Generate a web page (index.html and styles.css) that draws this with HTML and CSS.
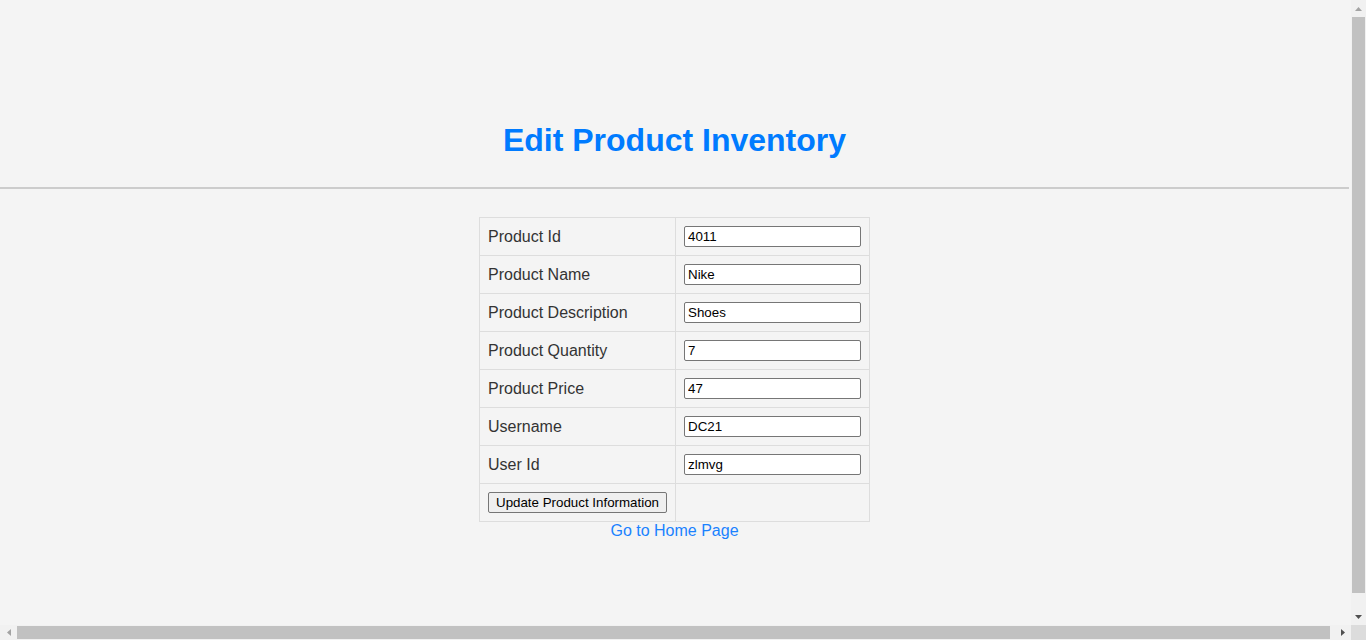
FILE: index.html
```html
<!DOCTYPE html>
<html lang="en">
<head>
<meta charset="utf-8">
<title>Edit Product Inventory</title>
<link rel="stylesheet" href="styles.css">
</head>
<body>
<div class="page">
  <header class="header">
    <h1 class="title">Edit Product Inventory</h1>
  </header>
  <main class="content">
    <form class="form">
      <table class="table">
        <tr><td class="label">Product Id</td><td class="field"><input class="input" type="text" value="4011"></td></tr>
        <tr><td class="label">Product Name</td><td class="field"><input class="input" type="text" value="Nike"></td></tr>
        <tr><td class="label">Product Description</td><td class="field"><input class="input" type="text" value="Shoes"></td></tr>
        <tr><td class="label">Product Quantity</td><td class="field"><input class="input" type="text" value="7"></td></tr>
        <tr><td class="label">Product Price</td><td class="field"><input class="input" type="text" value="47"></td></tr>
        <tr><td class="label">Username</td><td class="field"><input class="input" type="text" value="DC21"></td></tr>
        <tr><td class="label">User Id</td><td class="field"><input class="input" type="text" value="zlmvg"></td></tr>
        <tr><td class="label"><button class="button" type="button">Update Product Information</button></td><td class="field"></td></tr>
      </table>
    </form>
    <a class="home-link" href="#">Go to Home Page</a>
  </main>
</div>

<div class="vscroll" aria-hidden="true">
  <span class="sb-btn">
    <svg width="7" height="4" viewBox="0 0 7 4"><polygon points="0,4 7,4 3.5,0" fill="#a3a3a3"/></svg>
  </span>
  <span class="sb-track sb-track-v"><span class="sb-thumb sb-thumb-v"></span></span>
  <span class="sb-btn">
    <svg width="7" height="4" viewBox="0 0 7 4"><polygon points="0,0 7,0 3.5,4" fill="#505050"/></svg>
  </span>
</div>
<div class="hscroll" aria-hidden="true">
  <span class="sb-btn">
    <svg width="4" height="7" viewBox="0 0 4 7"><polygon points="4,0 4,7 0,3.5" fill="#a3a3a3"/></svg>
  </span>
  <span class="sb-track sb-track-h"><span class="sb-thumb sb-thumb-h"></span></span>
  <span class="sb-btn">
    <svg width="4" height="7" viewBox="0 0 4 7"><polygon points="0,0 0,7 4,3.5" fill="#505050"/></svg>
  </span>
</div>
<div class="sb-corner" aria-hidden="true"></div>
</body>
</html>
```
FILE: styles.css
```css
body {
  margin: 0;
  background: #f4f4f4;
  font-family: "Liberation Sans", Arial, sans-serif;
  color: #333;
}

.page {
  width: calc(100% - 17px);
  min-height: 100vh;
  display: flex;
  flex-direction: column;
}

.header {
  padding: 122px 0 28px;
  border-bottom: 2px solid #cccccc;
  text-align: center;
}

.title {
  margin: 0;
  font-size: 32px;
  line-height: 37px;
  font-weight: bold;
  color: #007bff;
}

.content {
  display: flex;
  flex-direction: column;
  align-items: center;
  padding-top: 28px;
}

.form {
  margin: 0;
}

.table {
  border-collapse: collapse;
}

.table td {
  border: 1px solid #dddddd;
  padding: 8px;
  font-size: 16px;
  line-height: 18px;
  vertical-align: middle;
}

.label {
  color: #333333;
}

.input {
  box-sizing: border-box;
  width: 177px;
  height: 21px;
  margin: 0;
  padding: 1px 3px;
  border: 1px solid #767676;
  border-radius: 2px;
  background: #ffffff;
  font-family: "Liberation Sans", Arial, sans-serif;
  font-size: 13.33px;
  color: #000000;
  display: block;
}

.button {
  box-sizing: border-box;
  height: 21px;
  margin: 0;
  padding: 1px 7px;
  border: 1px solid #767676;
  border-radius: 2px;
  background: #efefef;
  font-family: "Liberation Sans", Arial, sans-serif;
  font-size: 13.33px;
  color: #000000;
  display: block;
}

.home-link {
  font-size: 16px;
  line-height: 18px;
  color: #1a82ff;
  text-decoration: none;
}

/* window scrollbars, drawn over the page */
.vscroll {
  position: fixed;
  top: 0;
  right: 0;
  width: 15px;
  height: calc(100% - 15px);
  background: #f1f1f1;
  display: flex;
  flex-direction: column;
}

.hscroll {
  position: fixed;
  left: 0;
  bottom: 0;
  width: calc(100% - 15px);
  height: 15px;
  background: #f1f1f1;
  display: flex;
}

.sb-btn {
  flex: 0 0 17px;
  display: flex;
  align-items: center;
  justify-content: center;
}

.sb-btn svg {
  display: block;
}

.sb-track {
  flex: 1;
  display: flex;
}

.sb-track-v {
  flex-direction: column;
  padding: 0 1px;
}

.sb-track-h {
  padding: 1px 0;
}

.sb-thumb {
  background: #c1c1c1;
}

.sb-thumb-v {
  height: 576px;
}

.sb-thumb-h {
  width: 1313px;
}

.sb-corner {
  position: fixed;
  right: 0;
  bottom: 0;
  width: 15px;
  height: 15px;
  background: #dcdcdc;
}
```
